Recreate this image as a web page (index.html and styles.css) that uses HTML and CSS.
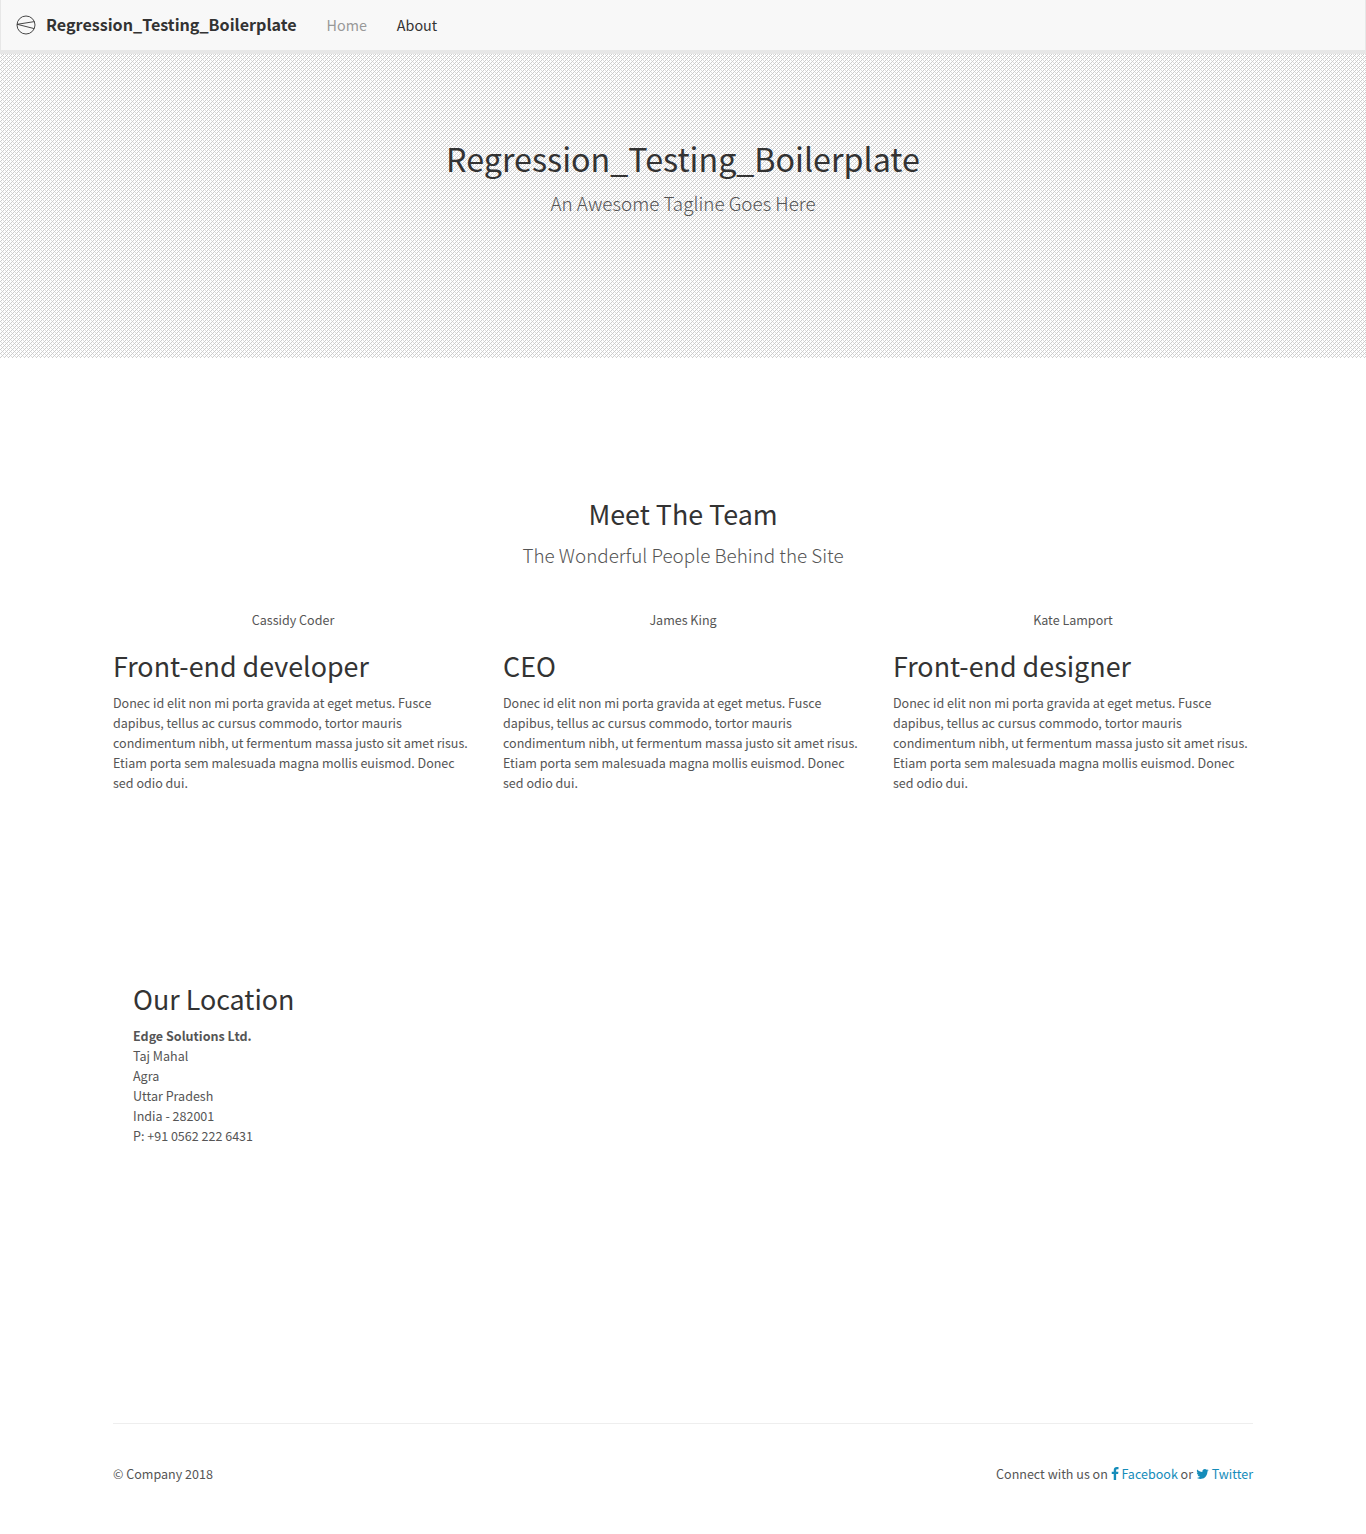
FILE: index.html
```html
<!DOCTYPE html>
<html lang="en">
<head>
<meta charset="utf-8">
<title>Regression_Testing_Boilerplate</title>
<link rel="stylesheet" href="styles.css">
</head>
<body>
<nav class="navbar">
  <a class="brand" href="#">
    <svg class="brand-icon" viewBox="0 0 20 20" width="20" height="20" fill="none" stroke="#333" stroke-width="0.9"><circle cx="10" cy="10" r="9"/><path d="M18.5 6.6 1.2 9.3 18.2 13.6"/></svg>
    <span>Regression_Testing_Boilerplate</span>
  </a>
  <a class="nav-link active" href="#">Home</a>
  <a class="nav-link" href="#">About</a>
</nav>
<header class="hero">
  <h1>Regression_Testing_Boilerplate</h1>
  <p class="lead">An Awesome Tagline Goes Here</p>
</header>
<main class="container">
  <section class="team-intro">
    <h2>Meet The Team</h2>
    <p class="lead">The Wonderful People Behind the Site</p>
  </section>
  <section class="team">
    <article>
      <p class="name">Cassidy Coder</p>
      <h2>Front-end developer</h2>
      <p>Donec id elit non mi porta gravida at eget metus. Fusce dapibus, tellus ac cursus commodo, tortor mauris condimentum nibh, ut fermentum massa justo sit amet risus. Etiam porta sem malesuada magna mollis euismod. Donec sed odio dui.</p>
    </article>
    <article>
      <p class="name">James King</p>
      <h2>CEO</h2>
      <p>Donec id elit non mi porta gravida at eget metus. Fusce dapibus, tellus ac cursus commodo, tortor mauris condimentum nibh, ut fermentum massa justo sit amet risus. Etiam porta sem malesuada magna mollis euismod. Donec sed odio dui.</p>
    </article>
    <article>
      <p class="name">Kate Lamport</p>
      <h2>Front-end designer</h2>
      <p>Donec id elit non mi porta gravida at eget metus. Fusce dapibus, tellus ac cursus commodo, tortor mauris condimentum nibh, ut fermentum massa justo sit amet risus. Etiam porta sem malesuada magna mollis euismod. Donec sed odio dui.</p>
    </article>
  </section>
  <section class="location">
    <h2>Our Location</h2>
    <address><strong>Edge Solutions Ltd.</strong><br>Taj Mahal<br>Agra<br>Uttar Pradesh<br>India - 282001<br>P: +91 0562 222 6431</address>
  </section>
  <footer class="footer">
    <p>© Company 2018</p>
    <p>Connect with us on <a href="#"><svg class="fb" viewBox="0 0 1024 1792" width="8" height="14" fill="currentColor"><path d="M959 12v264H802q-86 0-116 36t-30 108v189h293l-39 296H656v759H350V905H95V609h255V391q0-186 104-288.500T731 0q147 0 228 12z"/></svg> Facebook</a> or <a href="#"><svg class="tw" viewBox="0 0 1664 1792" width="13" height="14" fill="currentColor"><path d="M1620 408q-67 98-162 167 1 14 1 42 0 130-38 259.500T1305.500 1125 1121 1335.500t-258 146-323 54.500q-271 0-496-145 35 4 78 4 225 0 401-138-105-2-188-64.500T221 1033q33 5 61 5 43 0 85-11-112-23-185.500-111.500T108 710v-4q68 38 146 41-66-44-105-115t-39-154q0-88 44-163 121 149 294.500 238.500T820 653q-8-38-8-74 0-134 94.500-228.500T1135 256q140 0 236 102 109-21 205-78-37 115-142 178 93-10 186-50z"/></svg> Twitter</a></p>
  </footer>
</main>
</body>
</html>
```
FILE: styles.css
```css
* { box-sizing: border-box; }
body {
  margin: 0;
  font: 12.54px/20px "Noto Sans CJK SC", "Source Sans Pro", sans-serif;
  color: #555;
  background: #fff;
}
a { color: #158cba; text-decoration: none; }
p { margin: 0; }
h1, h2 { margin: 0; font-weight: 400; color: #333; }
h1 { font-size: 32.25px; line-height: 40px; }
h2 { font-size: 26.87px; line-height: 33px; }
.lead { font-size: 18.83px; font-weight: 300; line-height: 30px; }
.navbar {
  display: flex;
  align-items: center;
  height: 54px;
  padding: 0 15px;
  background: #f8f8f8;
  border: solid #e7e7e7;
  border-width: 0 1px 4px;
}
.brand {
  display: flex;
  align-items: center;
  gap: 10px;
  margin-right: 30px;
  font-size: 16.12px;
  font-weight: 700;
  color: #333;
}
.brand-icon { display: block; }
.brand span { padding-bottom: 2px; }
.nav-link { margin-right: 30px; font-size: 14.33px; color: #333; }
.nav-link.active { color: #999; }
.hero {
  height: 304px;
  padding-top: 84px;
  text-align: center;
  background: url("data:image/svg+xml,%3Csvg xmlns='http://www.w3.org/2000/svg' width='4' height='4' shape-rendering='crispEdges'%3E%3Cpath fill='%23ccc' d='M3 0h1v1H3zM2 1h1v1H2zM1 2h1v1H1zM0 3h1v1H0z'/%3E%3Cpath fill='%23ddd' d='M1 0h1v1H1zM3 2h1v1H3z'/%3E%3C/svg%3E");
}
.hero .lead { margin-top: 10px; }
.container { width: 1140px; margin: 0 auto; }
.team-intro { padding-top: 139px; text-align: center; }
.team-intro .lead { margin-top: 10px; }
.team {
  display: grid;
  grid-template-columns: repeat(3, 360px);
  gap: 30px;
  padding-top: 40px;
}
.team .name { text-align: center; }
.team h2 { margin: 19px 0 11px; }
.location { padding: 189px 20px 0; }
.location h2 { margin-bottom: 11px; }
address { font-style: normal; }
.footer {
  display: flex;
  justify-content: space-between;
  margin-top: 277px;
  padding-top: 40px;
  border-top: 1px solid #eee;
}
.fb, .tw { vertical-align: -2px; }
```
